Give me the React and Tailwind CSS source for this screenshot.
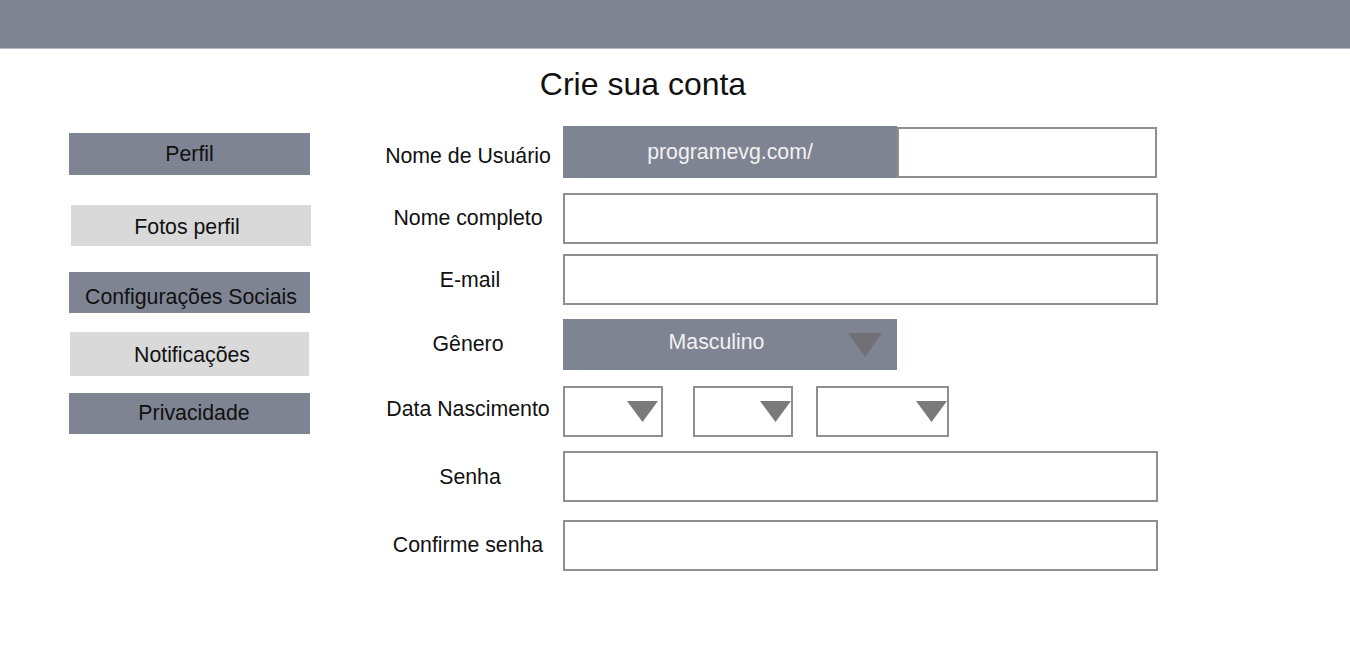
import React from "react";

const Tri = ({ w, h, color }) => (
  <svg width={w} height={h} viewBox={`0 0 ${w} ${h}`} className="block">
    <polygon points={`0,0 ${w},0 ${w / 2},${h}`} fill={color} />
  </svg>
);

const Label = ({ children, cls = "" }) => (
  <div className={`w-[180px] shrink-0 text-center text-[21.3px] leading-[25px] text-[#111] ${cls}`}>{children}</div>
);

export default function App() {
  return (
    <div className="w-[1350px] h-[650px] bg-white overflow-hidden" style={{ fontFamily: '"Liberation Sans", Arial, sans-serif' }}>
      <div className="h-[49px] bg-[#7f8493] border-b border-[#b2b6c0]" />
      <div className="mt-[17px] pr-[64px] text-center text-[32px] leading-[37px] text-[#111]">Crie sua conta</div>
      <div className="mt-[23px] flex items-start">
        {/* Sidebar */}
        <div className="ml-[69px] mt-[7px] w-[241px] shrink-0 flex flex-col text-[21.3px] text-[#111]">
          <div className="h-[42px] w-[241px] bg-[#7f8493] flex items-center justify-center pt-[1px]">Perfil</div>
          <div className="mt-[30px] ml-[2px] h-[41px] w-[240px] bg-[#d9d9d9] flex items-center justify-center pr-[8px] pt-[4px]">Fotos perfil</div>
          <div className="mt-[26px] h-[41px] w-[241px] bg-[#7f8493] flex items-center justify-center pt-[10px] pl-[3px]">Configurações Sociais</div>
          <div className="mt-[19px] ml-[1px] h-[44px] w-[239px] bg-[#d9d9d9] flex items-center justify-center pl-[5px] pt-[3px]">Notificações</div>
          <div className="mt-[17px] h-[41px] w-[241px] bg-[#7f8493] flex items-center justify-center pl-[9px]">Privacidade</div>
        </div>
        {/* Form */}
        <div className="ml-[68px] flex flex-col">
          <div className="flex items-center h-[52px]">
            <Label cls="pt-[8px]">Nome de Usuário</Label>
            <div className="ml-[5px] h-[52px] w-[334px] bg-[#7f8493] flex items-center justify-center text-[21.3px] text-[#f2f2f2] pt-[1px]">programevg.com/</div>
            <div className="mt-[1px] h-[51px] w-[260px] border-2 border-[#8f8f8f] bg-white" />
          </div>
          <div className="mt-[15px] flex items-center h-[51px]">
            <Label cls="pb-[1px]">Nome completo</Label>
            <div className="ml-[5px] h-[51px] w-[595px] border-2 border-[#8f8f8f] bg-white" />
          </div>
          <div className="mt-[10px] flex items-center h-[51px]">
            <Label cls="pl-[4px] pt-[1px]">E-mail</Label>
            <div className="ml-[5px] h-[51px] w-[595px] border-2 border-[#8f8f8f] bg-white" />
          </div>
          <div className="mt-[14px] flex items-center h-[51px]">
            <Label cls="pb-[1px]">Gênero</Label>
            <div className="ml-[5px] h-[51px] w-[334px] bg-[#7f8493] flex items-center text-[21.3px] text-[#f2f2f2]">
              <div className="flex-1 text-center pl-[22px] pb-[3px]">Masculino</div>
              <div className="mr-[15px] mt-[1px]"><Tri w={34} h={24} color="#707075" /></div>
            </div>
          </div>
          <div className="mt-[16px] flex items-center h-[51px]">
            <Label cls="pb-[5px]">Data Nascimento</Label>
            <div className="ml-[5px] h-[51px] w-[100px] border-2 border-[#8f8f8f] bg-white flex items-start justify-end pt-[13px] pr-[3px]">
              <Tri w={31} h={21} color="#7a7a7a" />
            </div>
            <div className="ml-[30px] h-[51px] w-[100px] border-2 border-[#8f8f8f] bg-white flex items-start justify-end pt-[13px]">
              <Tri w={31} h={21} color="#7a7a7a" />
            </div>
            <div className="ml-[23px] h-[51px] w-[133px] border-2 border-[#8f8f8f] bg-white flex items-start justify-end pt-[13px]">
              <Tri w={31} h={21} color="#7a7a7a" />
            </div>
          </div>
          <div className="mt-[14px] flex items-center h-[51px]">
            <Label cls="pl-[4px] pt-[1px]">Senha</Label>
            <div className="ml-[5px] h-[51px] w-[595px] border-2 border-[#8f8f8f] bg-white" />
          </div>
          <div className="mt-[18px] flex items-center h-[51px]">
            <Label>Confirme senha</Label>
            <div className="ml-[5px] h-[51px] w-[595px] border-2 border-[#8f8f8f] bg-white" />
          </div>
        </div>
      </div>
    </div>
  );
}
